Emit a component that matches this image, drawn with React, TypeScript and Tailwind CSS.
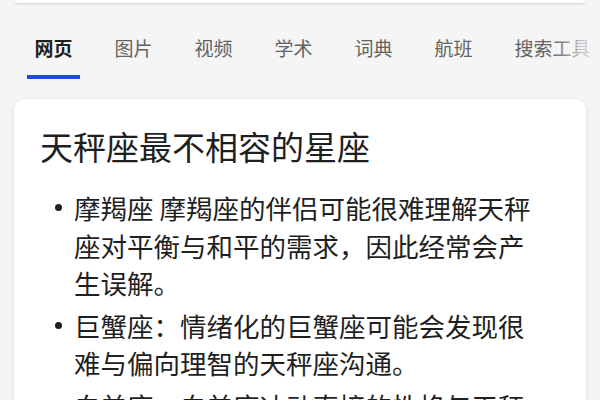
const tabs = ["网页", "图片", "视频", "学术", "词典", "航班", "搜索工具"]

const items = [
  "摩羯座 摩羯座的伴侣可能很难理解天秤座对平衡与和平的需求，因此经常会产生误解。",
  "巨蟹座：情绪化的巨蟹座可能会发现很难与偏向理智的天秤座沟通。",
  "白羊座：白羊座冲动直接的性格与天秤座犹豫不决的性格常常发生冲突。",
]

export default function App() {
  return (
    <div
      className="w-[600px] h-[400px] overflow-hidden bg-[#f5f5f5] text-[#202124]"
      style={{ fontFamily: '"Noto Sans CJK SC", "Noto Sans", sans-serif' }}
    >
      <div className="mx-[15px] h-[3px] rounded-b-xl bg-white shadow-[0_1px_3px_rgba(0,0,0,0.15)]" />

      <div className="relative mt-[31px] overflow-hidden">
        <div className="flex gap-[27px] pl-[27px] whitespace-nowrap">
          {tabs.map((t, i) => (
            <div key={t} className="flex shrink-0 flex-col items-center">
              <span
                className={
                  "px-[7.5px] text-[19px] leading-[28px] " +
                  (i === 0 ? "font-bold text-[#1f1f1f]" : "text-[#636363]")
                }
              >
                {t}
              </span>
              <div
                className={
                  "mt-[12.5px] h-[4.5px] w-full " + (i === 0 ? "bg-[#1c4fd2]" : "bg-transparent")
                }
              />
            </div>
          ))}
        </div>
        <div className="pointer-events-none absolute right-0 top-0 h-full w-[50px] bg-gradient-to-r from-transparent to-[#f5f5f5]" />
      </div>

      <div className="mx-[14px] mt-[20px] h-[340px] rounded-[10px] bg-white pl-[26px] pr-[43px] pt-[27px] shadow-[0_1px_4px_rgba(0,0,0,0.12)]">
        <h1 className="text-[33px] font-normal leading-[40px] text-[#1f1f1f]">天秤座最不相容的星座</h1>
        <ul className="mt-[23px] flex flex-col gap-[5px]">
          {items.map((it) => (
            <li key={it} className="flex text-[26.5px] leading-[37.5px] text-[#1f1f1f]">
              <div className="flex h-[37.5px] w-[34px] shrink-0 items-center justify-center pl-[2px]">
                <div className="h-[7px] w-[7px] rounded-full bg-[#1f1f1f]" />
              </div>
              <span>{it}</span>
            </li>
          ))}
        </ul>
      </div>
    </div>
  )
}
